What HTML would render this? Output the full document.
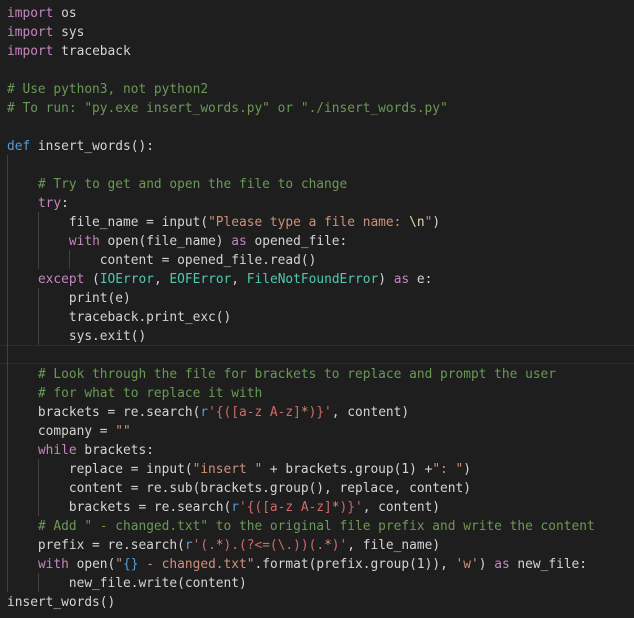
<!DOCTYPE html>
<html><head><meta charset="utf-8"><style>
html,body{margin:0;padding:0;background:#1e1e1e;width:634px;height:618px;overflow:hidden;position:relative}
pre{position:absolute;left:7px;top:4px;margin:0;font-family:"DejaVu Sans Mono","Liberation Mono",monospace;font-size:12.85px;line-height:19px;color:#d4d4d4;white-space:pre}
.k{color:#c586c0}.d{color:#569cd6}.c{color:#6a9955}.s{color:#ce9178}.r{color:#d16969}.t{color:#4ec9b0}.f{color:#dcdcaa}
.g{position:absolute;width:1px;background:#404040}
.hl{position:absolute;left:0;right:0;top:345px;height:17px;border-top:1px solid #2c2c2c;border-bottom:1px solid #2c2c2c}
</style></head><body>
<div class="hl"></div>
<div class="g" style="left:7px;top:155px;height:437px"></div>
<div class="g" style="left:38px;top:212px;height:57px"></div>
<div class="g" style="left:69px;top:250px;height:19px"></div>
<div class="g" style="left:38px;top:288px;height:57px"></div>
<div class="g" style="left:38px;top:459px;height:57px"></div>
<div class="g" style="left:38px;top:573px;height:19px"></div>
<pre><span class="k">import</span> os
<span class="k">import</span> sys
<span class="k">import</span> traceback

<span class="c"># Use python3, not python2</span>
<span class="c"># To run: "py.exe insert_words.py" or "./insert_words.py"</span>

<span class="d">def</span> insert_words():

    <span class="c"># Try to get and open the file to change</span>
    <span class="k">try</span>:
        file_name = input(<span class="s">"Please type a file name: </span><span class="f">\n</span><span class="s">"</span>)
        <span class="k">with</span> open(file_name) <span class="k">as</span> opened_file:
            content = opened_file.read()
    <span class="k">except</span> (<span class="t">IOError</span>, <span class="t">EOFError</span>, <span class="t">FileNotFoundError</span>) <span class="k">as</span> e:
        print(e)
        traceback.print_exc()
        sys.exit()

    <span class="c"># Look through the file for brackets to replace and prompt the user</span>
    <span class="c"># for what to replace it with</span>
    brackets = re.search(<span class="d">r</span><span class="r">'{(</span><span class="r">[a-z A-z]</span><span class="s">*</span><span class="r">)}'</span>, content)
    company = <span class="s">""</span>
    <span class="k">while</span> brackets:
        replace = input(<span class="s">"insert "</span> + brackets.group(1) +<span class="s">": "</span>)
        content = re.sub(brackets.group(), replace, content)
        brackets = re.search(<span class="d">r</span><span class="r">'{(</span><span class="r">[a-z A-z]</span><span class="s">*</span><span class="r">)}'</span>, content)
    <span class="c"># Add " - changed.txt" to the original file prefix and write the content</span>
    prefix = re.search(<span class="d">r</span><span class="r">'(.</span><span class="s">*</span><span class="r">).(?&lt;=(\.))(.</span><span class="s">*</span><span class="r">)'</span>, file_name)
    <span class="k">with</span> open(<span class="s">"</span><span class="d">{}</span><span class="s"> - changed.txt"</span>.format(prefix.group(1)), <span class="s">'w'</span>) <span class="k">as</span> new_file:
        new_file.write(content)
insert_words()</pre>
</body></html>
